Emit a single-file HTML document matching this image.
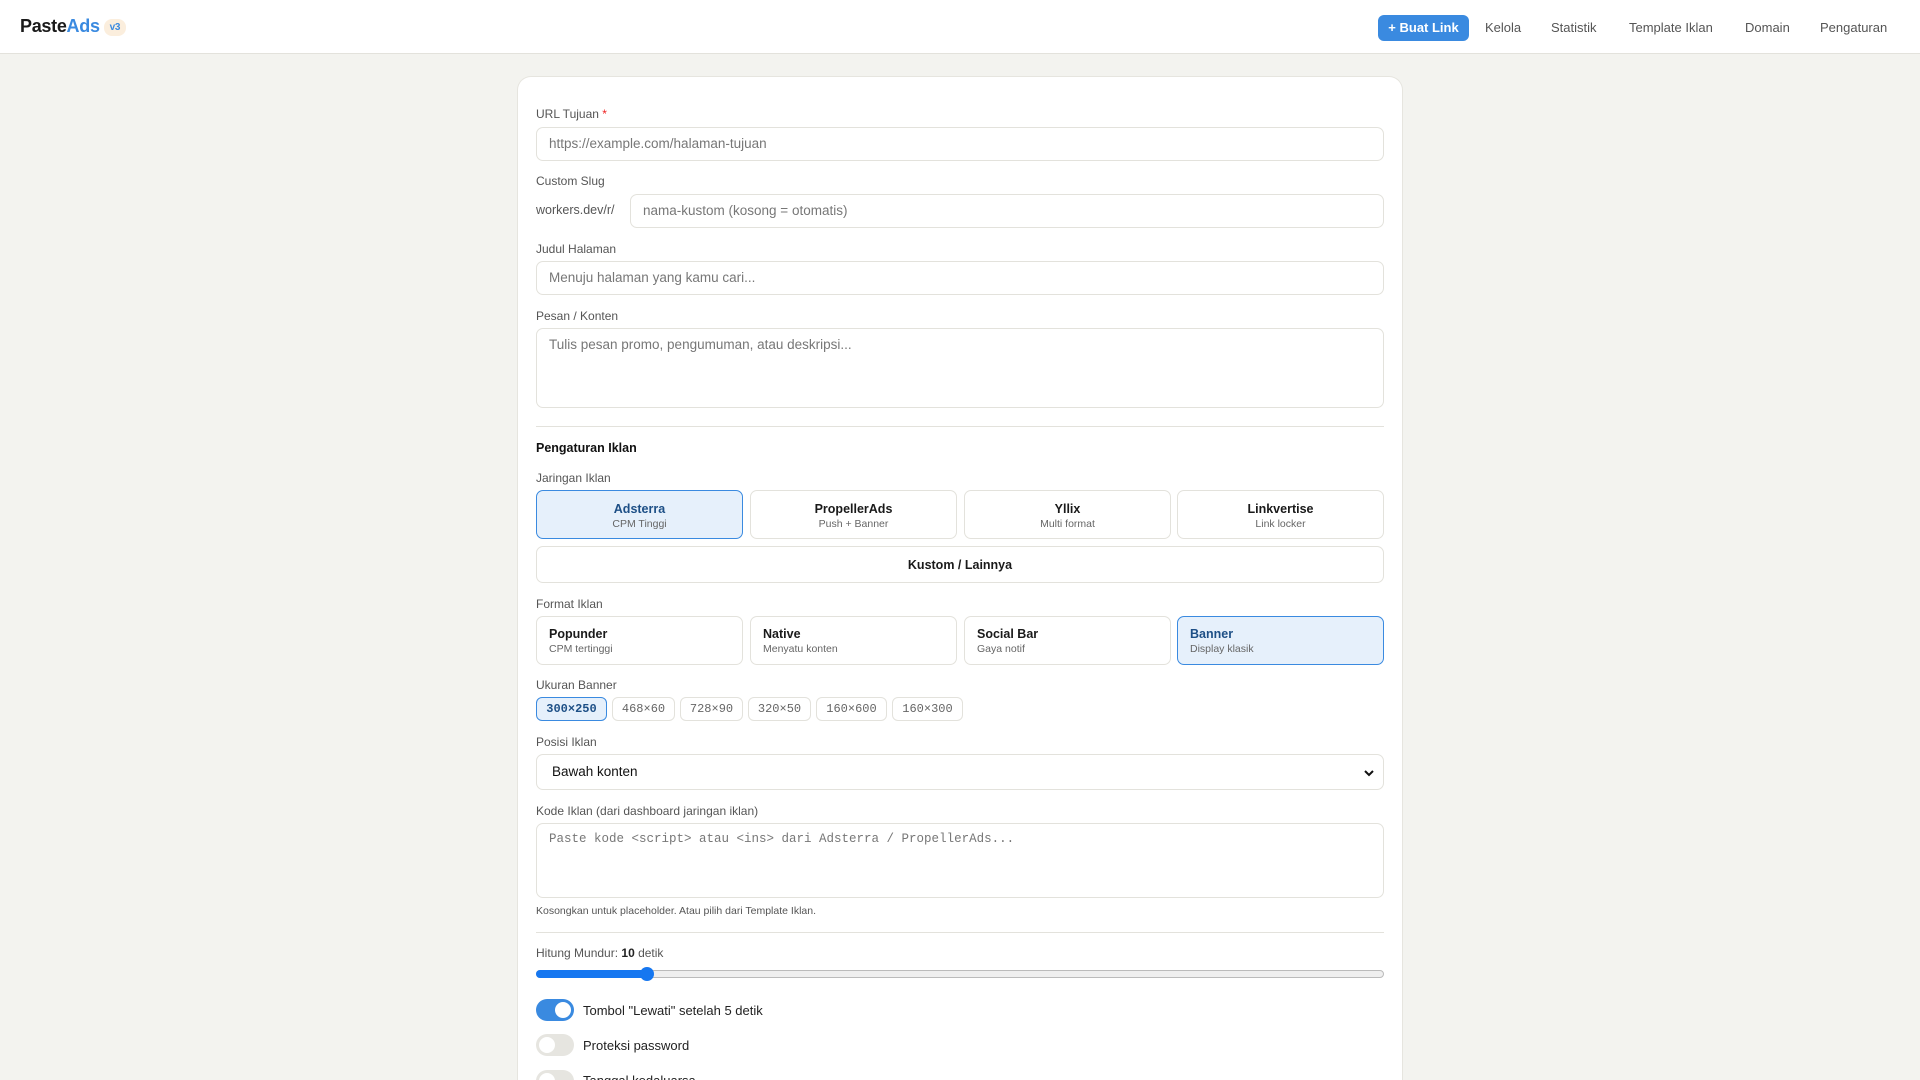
<!DOCTYPE html>
<html style="width:1920px;height:1080px;overflow:hidden"><head><meta charset="utf-8"><style>
*{box-sizing:border-box;margin:0;padding:0}
body{width:1920px;height:1080px;overflow:hidden;background:#f3f3ef;font-family:"Liberation Sans",Arial,sans-serif;color:#1a1a1a;position:relative}
.hdr{position:absolute;left:0;top:0;width:1920px;height:54px;background:#fff;border-bottom:1px solid #e3e2dc}
.logo{position:absolute;left:20px;top:16px;font-size:18px;font-weight:bold;letter-spacing:-0.3px}
.logo b{color:#3a8ae0}
.ver{display:inline-block;background:#fbeedd;color:#3a8ae0;font-size:10px;border-radius:8px;padding:3px 6px;margin-left:4px;vertical-align:2px;font-weight:bold}
.nav{position:absolute;top:15px;height:26px;font-size:13px;color:#555;line-height:26px}
.btn{background:#3a8ae0;color:#fff;border-radius:6px;padding:0 12px;font-weight:bold}
.card{position:absolute;left:517px;top:76px;width:886px;height:1004px;background:#fff;border:1px solid #e6e5df;border-bottom:none;border-radius:14px 14px 0 0}
.a{position:absolute}
.lbl{position:absolute;left:536px;font-size:12px;color:#555}
.inp{position:absolute;left:536px;width:848px;border:1px solid #e3e2dc;border-radius:7px;background:#fff;font-size:13.5px;color:#777;padding:0 12px}
.hr{position:absolute;left:536px;width:848px;height:1px;background:#e3e2dc}
.opt{position:absolute;border:1px solid #e3e2dc;border-radius:7px;background:#fff;text-align:center;width:207px;height:49px}
.opt .t{font-size:12.5px;font-weight:bold;margin-top:11px;color:#1a1a1a}
.opt .s{font-size:10.5px;color:#666;margin-top:2px}
.sel{background:#e6f0fb;border-color:#3a8ae0}
.sel .t{color:#1d4f86}
.fo{text-align:left;padding-left:12px}
.fo .t{margin-top:10px}
.chip{position:absolute;top:697px;height:24px;border:1px solid #e3e2dc;border-radius:6px;font-family:"Liberation Mono",monospace;font-size:12px;color:#666;line-height:22px;text-align:center}
.tg{position:absolute;left:536px;width:38px;height:22px;border-radius:11px;background:#e6e5e0}
.tg i{position:absolute;top:3px;left:3px;width:16px;height:16px;border-radius:50%;background:#fff}
.tg.on{background:#3a8ae0}.tg.on i{left:19px}
.tl{position:absolute;left:583px;font-size:13px;color:#222}
</style></head><body>
<div class="hdr">
<div class="logo">Paste<b>Ads</b><span class="ver">v3</span></div>
<div class="nav btn" style="left:1378px;width:91px;text-align:center;padding:0">+ Buat Link</div>
<div class="nav" style="left:1485px">Kelola</div>
<div class="nav" style="left:1551px">Statistik</div>
<div class="nav" style="left:1629px">Template Iklan</div>
<div class="nav" style="left:1745px">Domain</div>
<div class="nav" style="left:1820px">Pengaturan</div>
</div>
<div class="card"></div>
<div class="lbl" style="top:107px">URL Tujuan <span style="color:#e22">*</span></div>
<div class="inp" style="top:127px;height:34px;line-height:32px">https://example.com/halaman-tujuan</div>
<div class="lbl" style="top:174px">Custom Slug</div>
<div class="lbl" style="top:203px;font-size:12.5px">workers.dev/r/</div>
<div class="inp" style="top:194px;left:630px;width:754px;height:34px;line-height:32px">nama-kustom (kosong = otomatis)</div>
<div class="lbl" style="top:242px">Judul Halaman</div>
<div class="inp" style="top:261px;height:34px;line-height:32px">Menuju halaman yang kamu cari...</div>
<div class="lbl" style="top:309px">Pesan / Konten</div>
<div class="inp" style="top:328px;height:80px;padding-top:8px">Tulis pesan promo, pengumuman, atau deskripsi...</div>
<div class="hr" style="top:426px"></div>
<div class="lbl" style="top:441px;font-weight:bold;color:#111;font-size:12.5px">Pengaturan Iklan</div>
<div class="lbl" style="top:471px">Jaringan Iklan</div>
<div class="opt sel" style="left:536px;top:490px"><div class="t">Adsterra</div><div class="s">CPM Tinggi</div></div>
<div class="opt" style="left:750px;top:490px"><div class="t">PropellerAds</div><div class="s">Push + Banner</div></div>
<div class="opt" style="left:964px;top:490px"><div class="t">Yllix</div><div class="s">Multi format</div></div>
<div class="opt" style="left:1177px;top:490px"><div class="t">Linkvertise</div><div class="s">Link locker</div></div>
<div class="opt" style="left:536px;top:546px;width:848px;height:37px"><div class="t" style="margin-top:11px">Kustom / Lainnya</div></div>
<div class="lbl" style="top:597px">Format Iklan</div>
<div class="opt fo" style="left:536px;top:616px"><div class="t">Popunder</div><div class="s">CPM tertinggi</div></div>
<div class="opt fo" style="left:750px;top:616px"><div class="t">Native</div><div class="s">Menyatu konten</div></div>
<div class="opt fo" style="left:964px;top:616px"><div class="t">Social Bar</div><div class="s">Gaya notif</div></div>
<div class="opt fo sel" style="left:1177px;top:616px"><div class="t">Banner</div><div class="s">Display klasik</div></div>
<div class="lbl" style="top:678px">Ukuran Banner</div>
<div class="chip" style="left:536px;width:71px;background:#e6f0fb;border-color:#3a8ae0;color:#1d4f86;font-weight:bold">300×250</div>
<div class="chip" style="left:612px;width:63px">468×60</div>
<div class="chip" style="left:680px;width:63px">728×90</div>
<div class="chip" style="left:748px;width:63px">320×50</div>
<div class="chip" style="left:816px;width:71px">160×600</div>
<div class="chip" style="left:892px;width:71px">160×300</div>
<div class="lbl" style="top:735px">Posisi Iklan</div>
<div class="inp" style="top:754px;height:36px;line-height:34px;color:#111;padding-left:15px">Bawah konten
<svg style="position:absolute;right:8px;top:13px" width="12" height="10" viewBox="0 0 12 10"><path d="M2 3l4 4 4-4" stroke="#111" stroke-width="2" fill="none"/></svg></div>
<div class="lbl" style="top:804px">Kode Iklan (dari dashboard jaringan iklan)</div>
<div class="inp" style="top:823px;height:75px;padding-top:8px;font-family:'Liberation Mono',monospace;font-size:12.5px;color:#777">Paste kode &lt;script&gt; atau &lt;ins&gt; dari Adsterra / PropellerAds...</div>
<div class="lbl" style="top:905px;font-size:10.5px">Kosongkan untuk placeholder. Atau pilih dari Template Iklan.</div>
<div class="hr" style="top:932px"></div>
<div class="lbl" style="top:946px">Hitung Mundur: <b style="color:#222">10</b> detik</div>
<div class="a" style="left:536px;top:970px;width:848px;height:8px;border-radius:4px;background:#efefef;border:1px solid #bbb"></div>
<div class="a" style="left:536px;top:970px;width:111px;height:8px;border-radius:4px;background:#1677f0"></div>
<div class="a" style="left:640px;top:967px;width:14px;height:14px;border-radius:50%;background:#1677f0"></div>
<div class="tg on" style="top:999px"><i></i></div><div class="tl" style="top:1003px">Tombol "Lewati" setelah 5 detik</div>
<div class="tg" style="top:1034px"><i></i></div><div class="tl" style="top:1038px">Proteksi password</div>
<div class="tg" style="top:1070px"><i></i></div><div class="tl" style="top:1073px">Tanggal kedaluarsa</div>
</body></html>
